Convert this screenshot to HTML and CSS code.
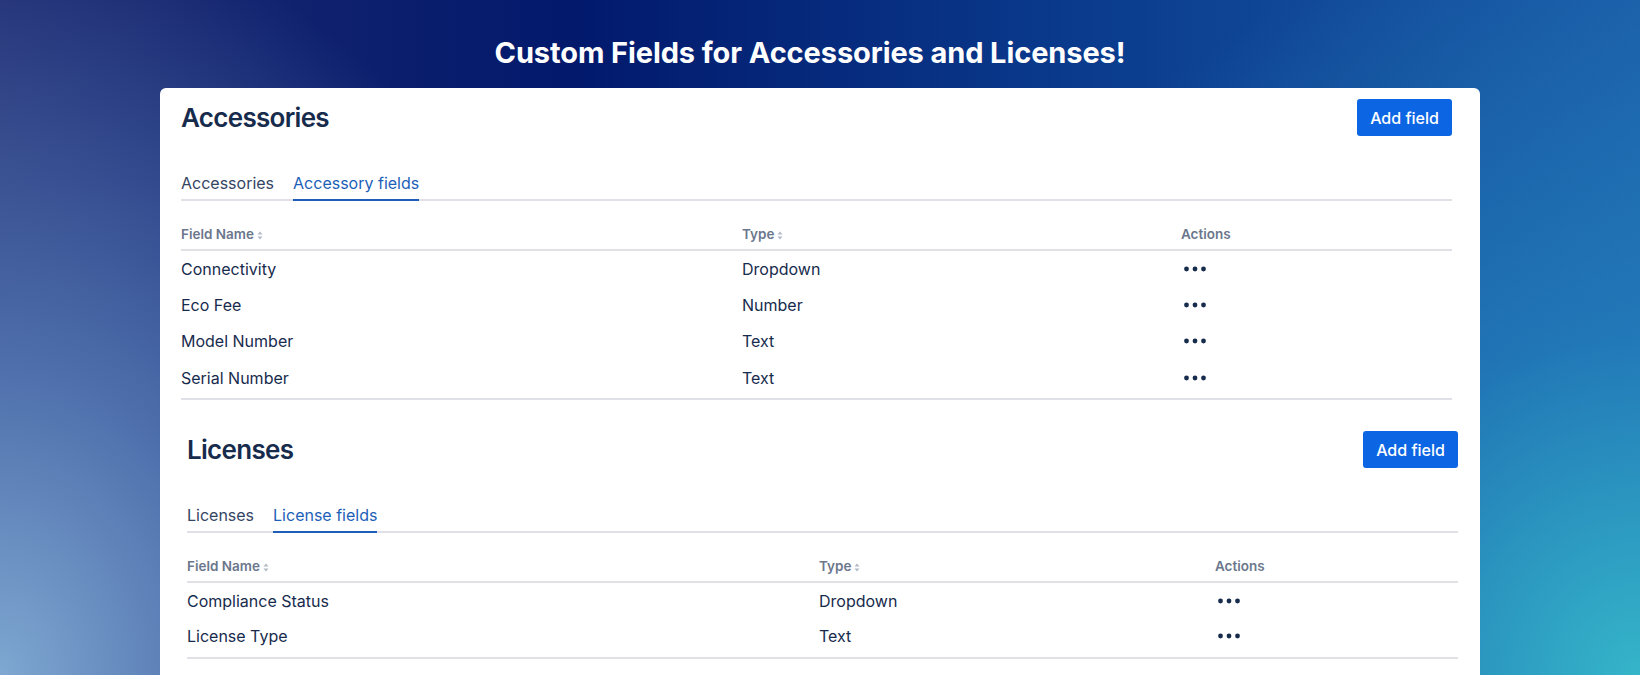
FILE: index.html
```html
<!DOCTYPE html>
<html lang="en">
<head>
<meta charset="utf-8">
<title>Custom Fields</title>
<link rel="stylesheet" href="styles.css">
</head>
<body>
<div class="page">
  <h1 class="title">Custom Fields for Accessories and Licenses!</h1>
  <div class="card">
    <section class="section section-a">
      <div class="sec-head">
        <h2 class="sec-title">Accessories</h2>
        <button class="btn">Add field</button>
      </div>
      <div class="tabs">
        <div class="tab">Accessories</div>
        <div class="tab active">Accessory fields</div>
      </div>
      <table class="tbl">
        <colgroup><col class="a1"><col class="a2"><col class="a3"></colgroup>
        <thead>
          <tr><th>Field Name<span class="sort"><svg width="6" height="9" viewBox="0 0 6 9"><path d="M3 0.5L5.5 3.5H0.5Z M3 8.5L5.5 5.5H0.5Z" fill="#b3bac5"/></svg></span></th><th>Type<span class="sort"><svg width="6" height="9" viewBox="0 0 6 9"><path d="M3 0.5L5.5 3.5H0.5Z M3 8.5L5.5 5.5H0.5Z" fill="#b3bac5"/></svg></span></th><th>Actions</th></tr>
        </thead>
        <tbody>
          <tr><td>Connectivity</td><td>Dropdown</td><td><svg class="dots" width="24" height="6" viewBox="0 0 24 6"><circle cx="3.5" cy="3" r="2.4"/><circle cx="12" cy="3" r="2.4"/><circle cx="20.5" cy="3" r="2.4"/></svg></td></tr>
          <tr><td>Eco Fee</td><td>Number</td><td><svg class="dots" width="24" height="6" viewBox="0 0 24 6"><circle cx="3.5" cy="3" r="2.4"/><circle cx="12" cy="3" r="2.4"/><circle cx="20.5" cy="3" r="2.4"/></svg></td></tr>
          <tr><td>Model Number</td><td>Text</td><td><svg class="dots" width="24" height="6" viewBox="0 0 24 6"><circle cx="3.5" cy="3" r="2.4"/><circle cx="12" cy="3" r="2.4"/><circle cx="20.5" cy="3" r="2.4"/></svg></td></tr>
          <tr><td>Serial Number</td><td>Text</td><td><svg class="dots" width="24" height="6" viewBox="0 0 24 6"><circle cx="3.5" cy="3" r="2.4"/><circle cx="12" cy="3" r="2.4"/><circle cx="20.5" cy="3" r="2.4"/></svg></td></tr>
        </tbody>
      </table>
    </section>
    <section class="section section-b">
      <div class="sec-head">
        <h2 class="sec-title">Licenses</h2>
        <button class="btn">Add field</button>
      </div>
      <div class="tabs">
        <div class="tab">Licenses</div>
        <div class="tab active">License fields</div>
      </div>
      <table class="tbl">
        <colgroup><col class="b1"><col class="b2"><col class="b3"></colgroup>
        <thead>
          <tr><th>Field Name<span class="sort"><svg width="6" height="9" viewBox="0 0 6 9"><path d="M3 0.5L5.5 3.5H0.5Z M3 8.5L5.5 5.5H0.5Z" fill="#b3bac5"/></svg></span></th><th>Type<span class="sort"><svg width="6" height="9" viewBox="0 0 6 9"><path d="M3 0.5L5.5 3.5H0.5Z M3 8.5L5.5 5.5H0.5Z" fill="#b3bac5"/></svg></span></th><th>Actions</th></tr>
        </thead>
        <tbody>
          <tr><td>Compliance Status</td><td>Dropdown</td><td><svg class="dots" width="24" height="6" viewBox="0 0 24 6"><circle cx="3.5" cy="3" r="2.4"/><circle cx="12" cy="3" r="2.4"/><circle cx="20.5" cy="3" r="2.4"/></svg></td></tr>
          <tr><td>License Type</td><td>Text</td><td><svg class="dots" width="24" height="6" viewBox="0 0 24 6"><circle cx="3.5" cy="3" r="2.4"/><circle cx="12" cy="3" r="2.4"/><circle cx="20.5" cy="3" r="2.4"/></svg></td></tr>
        </tbody>
      </table>
    </section>
  </div>
</div>
</body>
</html>
```

FILE: styles.css
```css
html, body {
  margin: 0;
  padding: 0;
  height: 100%;
  overflow: hidden;
}
body {
  font-family: Inter, "Noto Sans", "Liberation Sans", sans-serif;
  color: #172b4d;
  background:
    radial-gradient(620px 760px at 0% 100%, rgba(126,167,209,1) 0%, rgba(95,135,192,0.75) 40%, rgba(60,95,165,0) 100%),
    radial-gradient(760px 760px at 100% 100%, rgba(53,181,201,1) 0%, rgba(38,135,192,0.65) 45%, rgba(30,100,180,0) 100%),
    linear-gradient(to right, #1f2a70 0%, #02196c 35%, #0a3a8c 65%, #1a5ca8 100%);
}
.page {
  display: flex;
  flex-direction: column;
  align-items: center;
  width: 1640px;
}
.title {
  margin: 0;
  padding: 33px 20px 0 0;
  height: 88px;
  box-sizing: border-box;
  font-size: 29px;
  line-height: 40px;
  font-weight: 700;
  color: #ffffff;
  letter-spacing: -0.1px;
}
.card {
  width: 1320px;
  height: 587px;
  box-sizing: border-box;
  background: #ffffff;
  border-radius: 6px 6px 0 0;
  padding: 11px 28px 0 21px;
  overflow: hidden;
}
.section-b {
  margin: 31px -6px 0 6px;
}
.sec-head {
  display: flex;
  justify-content: space-between;
  align-items: center;
  height: 37px;
}
.sec-title {
  margin: 0;
  font-size: 26px;
  font-weight: 600;
  color: #172b4d;
  letter-spacing: -0.7px;
}
.btn {
  font-family: inherit;
  font-size: 16px;
  font-weight: 500;
  color: #ffffff;
  background: #0c66e4;
  border: none;
  border-radius: 3px;
  width: 95px;
  height: 37px;
  padding: 0;
}
.tabs {
  display: flex;
  gap: 19px;
  margin-top: 37px;
  border-bottom: 2px solid #dfe1e6;
}
.tab {
  font-size: 16px;
  line-height: 20px;
  padding-bottom: 6px;
  margin-bottom: -2px;
  border-bottom: 2px solid transparent;
  color: #344563;
}
.tab.active {
  color: #1d5fb8;
  border-bottom-color: #1d5fb8;
}
.tbl {
  width: 100%;
  margin-top: 15px;
  border-collapse: collapse;
  table-layout: fixed;
}
.a1 { width: 561px; }
.a2 { width: 439px; }
.b1 { width: 632px; }
.b2 { width: 396px; }
.tbl th {
  text-align: left;
  font-size: 13.5px;
  line-height: 18px;
  font-weight: 600;
  color: #6b778c;
  padding: 9px 0 6px;
  border-bottom: 2px solid #dfe1e6;
}
.sort {
  display: inline-block;
  margin-left: 3px;
  vertical-align: -1px;
}
.sort svg { display: block; }
.tbl tbody tr { height: 36.6px; }
.tbl tbody tr:last-child { height: 39.3px; }
.tbl td {
  font-size: 16px;
  line-height: 20px;
  padding: 0;
  color: #172b4d;
  vertical-align: middle;
}
.tbl tbody tr:last-child td {
  padding-bottom: 2.7px;
  border-bottom: 2px solid #dfe1e6;
}
.dots {
  display: block;
  margin-left: 2px;
  fill: #172b4d;
}
```
